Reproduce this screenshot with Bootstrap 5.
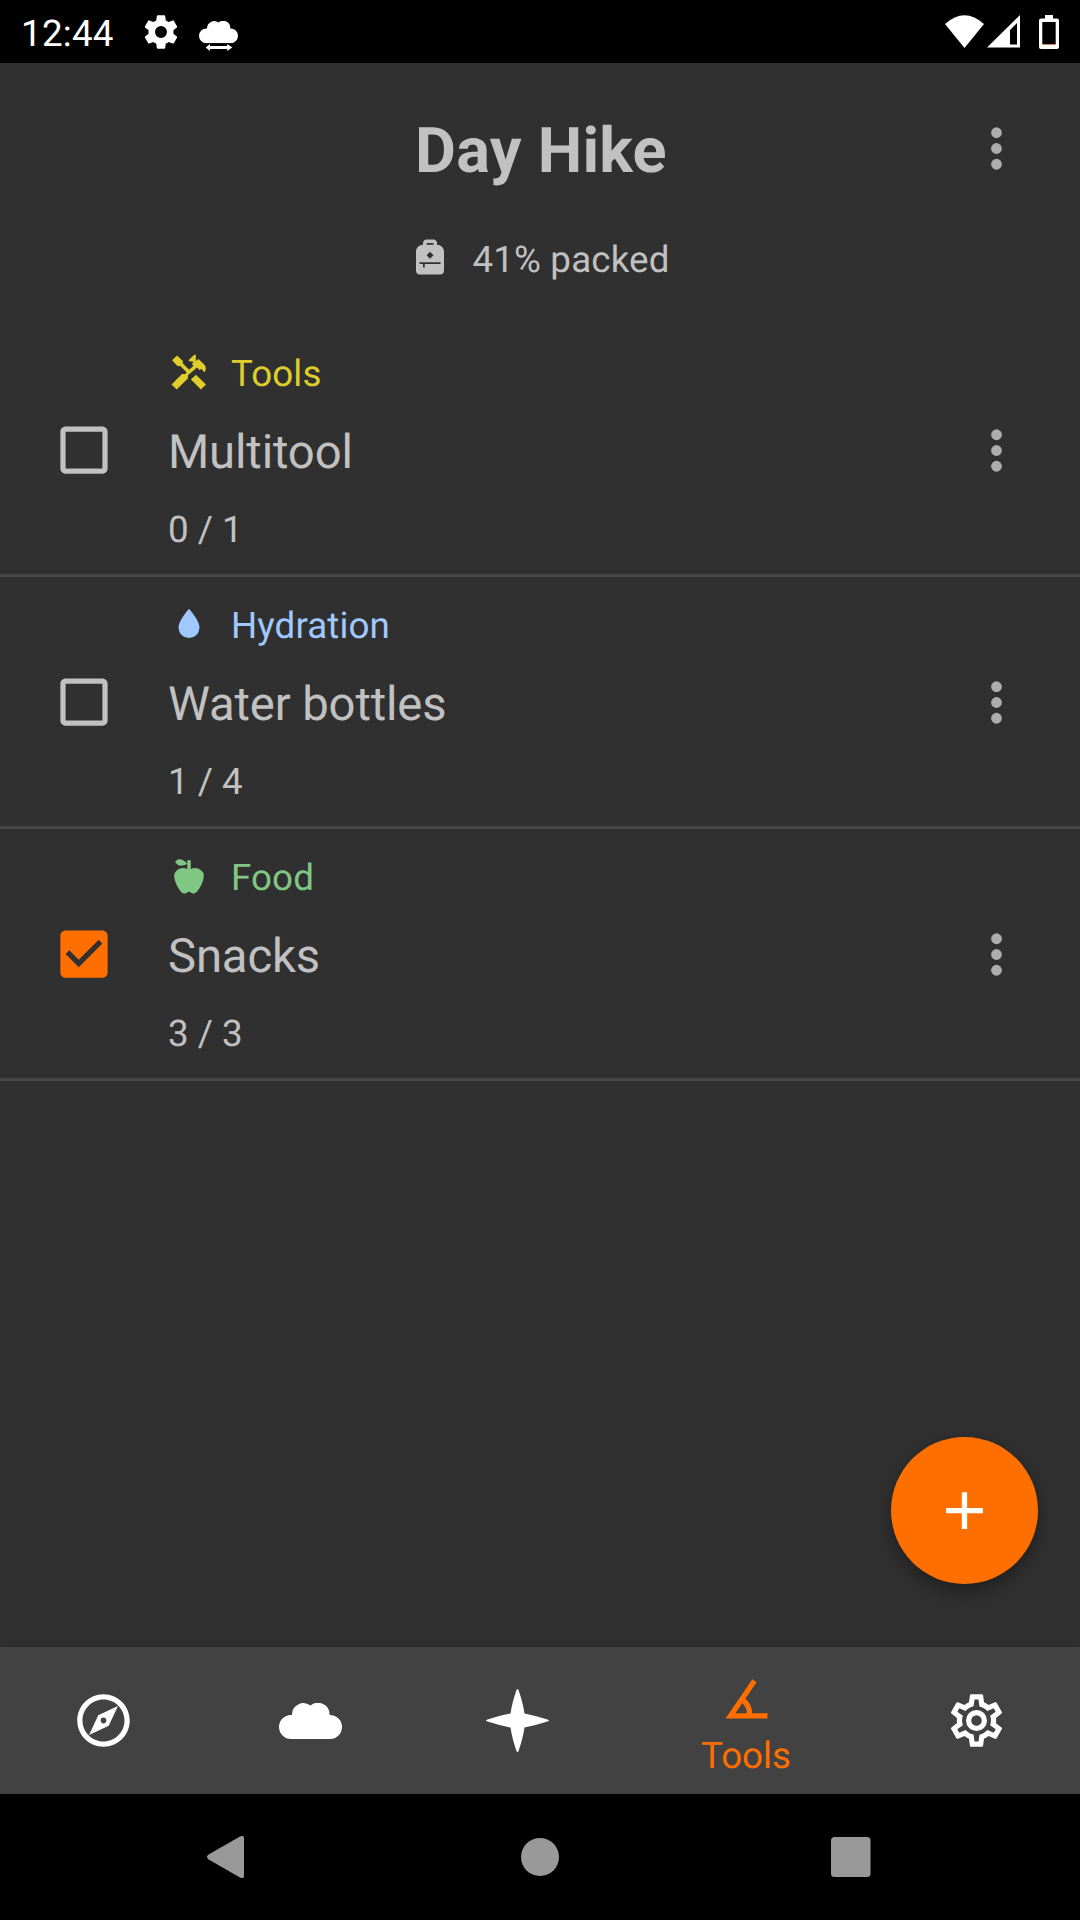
<!DOCTYPE html>
<html lang="en">
<head>
<meta charset="utf-8">
<meta name="viewport" content="width=device-width, initial-scale=1">
<title>Day Hike</title>
<link href="https://cdn.jsdelivr.net/npm/bootstrap@5.3.0/dist/css/bootstrap.min.css" rel="stylesheet">
<style>
  body { background: #303030; color: #c1c1c1; font-family: Roboto, sans-serif; font-size: 36.75px; line-height: 42px; text-rendering: geometricPrecision; }
  svg { display: block; fill: currentColor; flex: none; }
  .phone { width: 1080px; height: 1920px; }
  .status { height: 63px; background: #000; color: #fff; padding: 0 21px 0 21px; }
  .clock { width: 101px; padding-top: 4px; letter-spacing: .25px; }
  .appbar { height: 262px; padding-top: 47px; }
  .title-row { height: 84px; }
  .title-row h1 { font-size: 63px; font-weight: 700; line-height: 84px; padding: 0 0 0 2px; letter-spacing: .25px; }
  .more { width: 63px; height: 63px; color: #adadad; margin-right: 52px; }
  .title-row .more { right: 0; top: 7px; }
  .item .more { margin-top: 2px; }
  .packed { height: 42px; margin-top: 42px; gap: 21px; padding-right: 1px; }
  .packed span { padding-top: 5px; letter-spacing: .15px; }
  .item { height: 252px; background: none; color: inherit; border: 0; border-bottom: 3px solid #474747; padding: 0; }
  .item + .item { border-top: 0; }
  .tick { margin-left: 52px; width: 64px; height: 64px; }
  .info { margin-left: 52px; padding-top: 26px; }
  .cat { gap: 21px; height: 42px; }
  .cat span { padding-top: 4px; letter-spacing: .1px; }
  .cat-tools { color: #dfcd2c; }
  .cat-water { color: #a0c9ff; }
  .cat-food { color: #81c784; }
  .item-name { font-size: 47.25px; line-height: 56px; margin-top: 31px; letter-spacing: -.15px; }
  .amount { line-height: 44px; margin-top: 28px; }
  .fab { width: 147px; height: 147px; background: #ff6f00; color: #fff; right: 42px; bottom: 63px; border: 0; box-shadow: 0 10px 20px rgba(0,0,0,.22), 0 3px 12px rgba(0,0,0,.14); }
  .tabs { height: 147px; background: #424242; color: #fff; box-shadow: 0 0 12px rgba(0,0,0,.2); }
  .tab { width: 207px; }
  .tab-wide { width: 251px; color: #ff6f00; }
  .tab-wide div { line-height: 42px; margin-top: 7px; padding-right: 1px; }
  .orange { color: #ff6f00; }
  .sysnav { height: 126px; background: #000; color: #999; }
</style>
</head>
<body>
<svg width="0" height="0" class="position-absolute">
  <defs>
    <symbol id="dots" viewBox="0 0 24 24"><circle cx="12" cy="6" r="2.05"/><circle cx="12" cy="12" r="2.05"/><circle cx="12" cy="18" r="2.05"/></symbol>
    <symbol id="box" viewBox="0 0 24 24"><path d="M19 5v14H5V5h14m0-2H5c-1.1 0-2 .9-2 2v14c0 1.1.9 2 2 2h14c1.1 0 2-.9 2-2V5c0-1.1-.9-2-2-2z"/></symbol>
    <symbol id="checked" viewBox="0 0 24 24"><path d="M19 3H5c-1.110 0-2 .9-2 2v14c0 1.100.89 2 2 2h14c1.110 0 2-.9 2-2V5c0-1.100-.89-2-2-2zm-9 14l-5-5 1.410-1.410L10 14.170l7.590-7.590L19 8l-9 9z"/></symbol>
    <symbol id="cloud" viewBox="0 0 63 36"><path d="M12 36A12 12 0 0 1 12 12H13A11.5 11.5 0 0 1 31.500 2.600A11.500 11.500 0 0 1 50.500 12H51A12 12 0 0 1 51 36Z"/></symbol>
  </defs>
</svg>
<div class="phone d-flex flex-column overflow-hidden">
  <header class="status d-flex align-items-center">
    <div class="clock">12:44</div>
    <svg width="40" height="40" viewBox="0 0 24 24" style="margin-left:19px"><path d="M12 15.600A3.600 3.600 0 0 1 8.400 12 3.600 3.600 0 0 1 12 8.400 3.600 3.600 0 0 1 15.600 12 3.600 3.600 0 0 1 12 15.600M19.430 13L19.500 12 19.430 11 21.540 9.370C21.730 9.220 21.780 8.950 21.660 8.730L19.660 5.270C19.540 5.050 19.270 4.960 19.050 5.050L16.560 6.050C16.040 5.660 15.500 5.320 14.870 5.070L14.500 2.420C14.460 2.180 14.250 2 14 2H10C9.750 2 9.540 2.180 9.500 2.420L9.130 5.070C8.500 5.320 7.960 5.660 7.440 6.050L4.950 5.050C4.730 4.960 4.460 5.050 4.340 5.270L2.340 8.730C2.210 8.950 2.270 9.220 2.460 9.370L4.570 11 4.500 12 4.570 13 2.460 14.630C2.270 14.780 2.210 15.050 2.340 15.270L4.340 18.730C4.460 18.950 4.730 19.030 4.950 18.950L7.440 17.940C7.960 18.340 8.500 18.680 9.130 18.930L9.500 21.580C9.540 21.820 9.750 22 10 22H14C14.250 22 14.460 21.820 14.500 21.580L14.870 18.930C15.500 18.670 16.040 18.340 16.560 17.940L19.050 18.950C19.270 19.030 19.540 18.950 19.660 18.730L21.660 15.270C21.780 15.050 21.730 14.780 21.540 14.630Z"/></svg>
    <svg width="39" height="30" viewBox="0 0 39 30" style="margin-left:18px;margin-top:8px"><use href="#cloud" y="0" width="39" height="22.300"/><path d="M6.700 26.500L11 23V24.900H28.200V23L33.300 26.500 28.200 30V28.100H11V30Z"/></svg>
    <svg class="ms-auto" width="39" height="33" viewBox="0 0 39 33"><path d="M0 9Q19.500-8.500 39 9L19.500 33Z"/></svg>
    <svg width="33" height="33" viewBox="0 0 33 33" style="margin-left:3px"><path fill-rule="evenodd" d="M33 0V32.500H0ZM30 8L23 15V29.500H30Z"/></svg>
    <svg width="20" height="34" viewBox="0 0 20 34" style="margin-left:19px"><path fill-rule="evenodd" d="M6 0H14V3.500H18A2 2 0 0 1 20 5.500V32A2 2 0 0 1 18 34H2A2 2 0 0 1 0 32V5.500A2 2 0 0 1 2 3.500H6ZM3.300 7V29H16.700V7Z"/><path fill="#d9826a" d="M3.300 29h13.400v1H3.300z"/></svg>
  </header>

  <main class="flex-grow-1 position-relative">
    <section class="appbar">
      <div class="title-row d-flex justify-content-center position-relative">
        <h1 class="m-0">Day Hike</h1>
        <svg class="more position-absolute"><use href="#dots"/></svg>
      </div>
      <div class="packed d-flex justify-content-center align-items-center">
        <svg width="42" height="42" viewBox="0 0 24 24"><path d="M16 5V4C16 2.900 15.110 2 14 2H10C8.900 2 8 2.900 8 4V5C5.790 5 4 6.790 4 9V20C4 21.100 4.900 22 6 22H18C19.110 22 20 21.100 20 20V9C20 6.790 18.210 5 16 5M10 4H14V5H10V4M12 9L14 11L12 13L10 11L12 9M18 16H9V18H8V16H6V15H18V16Z"/></svg>
        <span>41% packed</span>
      </div>
    </section>

    <div class="list-group rounded-0">
      <div class="list-group-item item d-flex">
        <svg class="tick align-self-center"><use href="#box" x=".5" y=".5" width="63" height="63"/></svg>
        <div class="info flex-grow-1">
          <div class="cat cat-tools d-flex align-items-center">
            <svg width="42" height="42" viewBox="0 0 24 24"><path d="M21.700 19.200L16 13.500 13.100 16.300 18.800 22ZM18.100 11L18.900 10.100 20.900 12.200C21.900 11 21.900 8.900 20.700 7.700L17.400 4.600 15.900 5.700V2.200L15 2.100 11.700 5.300 12.500 6H14.600L13.700 7.500 14.600 8.400 12.100 10.700 8.500 7.200V5.700L5.200 2.500 2.300 5.300 5.400 8.500H7L10.600 12.200 10.100 13.100H8L2 19.100 4.900 22 11.400 15.700V13.900L16.600 9.400Z"/></svg>
            <span>Tools</span>
          </div>
          <div class="item-name">Multitool</div>
          <div class="amount">0 / 1</div>
        </div>
        <svg class="more align-self-center"><use href="#dots"/></svg>
      </div>
      <div class="list-group-item item d-flex">
        <svg class="tick align-self-center"><use href="#box" x=".5" y=".5" width="63" height="63"/></svg>
        <div class="info flex-grow-1">
          <div class="cat cat-water d-flex align-items-center">
            <svg width="42" height="42" viewBox="0 0 24 24"><path d="M12 20A6 6 0 0 1 6 14C6 10 12 3.250 12 3.250C12 3.250 18 10 18 14A6 6 0 0 1 12 20Z"/></svg>
            <span>Hydration</span>
          </div>
          <div class="item-name">Water bottles</div>
          <div class="amount">1 / 4</div>
        </div>
        <svg class="more align-self-center"><use href="#dots"/></svg>
      </div>
      <div class="list-group-item item d-flex">
        <svg class="tick align-self-center orange"><use href="#checked" x=".5" y=".5" width="63" height="63"/></svg>
        <div class="info flex-grow-1">
          <div class="cat cat-food d-flex align-items-center">
            <svg width="42" height="42" viewBox="0 0 24 24"><path d="M20 10C22 13 17 22 15 22C13 22 13 21 12 21C11 21 11 22 9 22C7 22 2 13 4 10C6 7 9 7 11 8V5C5.380 8.070 4.110 3.780 4.110 3.780C4.110 3.780 6.770 .19 11 5V3H13V8C15 7 18 7 20 10Z"/></svg>
            <span>Food</span>
          </div>
          <div class="item-name">Snacks</div>
          <div class="amount">3 / 3</div>
        </div>
        <svg class="more align-self-center"><use href="#dots"/></svg>
      </div>
    </div>

    <button class="fab btn rounded-circle position-absolute d-flex align-items-center justify-content-center p-0" aria-label="Add">
      <svg width="63" height="63" viewBox="0 0 24 24"><path d="M19 13h-6v6h-2v-6H5v-2h6V5h2v6h6v2z"/></svg>
    </button>
  </main>

  <nav class="tabs d-flex">
    <div class="tab d-flex align-items-center justify-content-center">
      <svg width="63" height="63" viewBox="0 0 24 24"><path d="M12 2C6.480 2 2 6.480 2 12s4.480 10 10 10 10-4.480 10-10S17.520 2 12 2zm0 18c-4.410 0-8-3.590-8-8s3.590-8 8-8 8 3.590 8 8-3.590 8-8 8zm-5.500-2.500l7.510-3.490L17.500 6.500 9.990 9.990 6.500 17.500zm5.500-6.600c.61 0 1.100.49 1.100 1.100s-.49 1.100-1.100 1.100-1.100-.49-1.100-1.100.49-1.100 1.100-1.100z"/></svg>
    </div>
    <div class="tab d-flex align-items-center justify-content-center">
      <svg width="63" height="36"><use href="#cloud"/></svg>
    </div>
    <div class="tab d-flex align-items-center justify-content-center">
      <svg width="63" height="63" viewBox="0 0 63 63"><path d="M31.500 0Q32.300 0 32.700 1.500Q37 14 38.500 24.500Q49 26.500 61.500 30.500Q63 31 63 31.500Q63 32 61.500 32.500Q49 36.500 38.500 38.500Q37 49 32.700 61.500Q32.300 63 31.500 63Q30.700 63 30.300 61.500Q26 49 24.500 38.500Q14 36.500 1.500 32.500Q0 32 0 31.500Q0 31 1.500 30.500Q14 26.500 24.500 24.500Q26 14 30.300 1.500Q30.700 0 31.500 0Z"/></svg>
    </div>
    <div class="tab-wide d-flex flex-column align-items-center pt-4">
      <svg width="63" height="63" viewBox="0 0 63 63" style="margin-top:-3px;margin-bottom:-3px"><g fill="none" stroke="currentColor" stroke-width="5.200"><path d="M52.500 47.900H15.500L39.500 12.700"/><path d="M27 31.500A17 17 0 0 1 34.400 47"/></g></svg>
      <div>Tools</div>
    </div>
    <div class="flex-grow-1 d-flex align-items-center justify-content-center">
      <svg width="63" height="63" viewBox="0 0 24 24"><path d="M12 8A4 4 0 0 1 16 12A4 4 0 0 1 12 16A4 4 0 0 1 8 12A4 4 0 0 1 12 8M12 10A2 2 0 0 0 10 12A2 2 0 0 0 12 14A2 2 0 0 0 14 12A2 2 0 0 0 12 10M10 22C9.750 22 9.540 21.820 9.500 21.580L9.130 18.930C8.500 18.680 7.960 18.340 7.440 17.940L4.950 18.950C4.730 19.030 4.460 18.950 4.340 18.730L2.340 15.270C2.210 15.050 2.270 14.780 2.460 14.630L4.570 12.970L4.500 12L4.570 11L2.460 9.370C2.270 9.220 2.210 8.950 2.340 8.730L4.340 5.270C4.460 5.050 4.730 4.960 4.950 5.050L7.440 6.050C7.960 5.660 8.500 5.320 9.130 5.070L9.500 2.420C9.540 2.180 9.750 2 10 2H14C14.250 2 14.460 2.180 14.500 2.420L14.870 5.070C15.500 5.320 16.040 5.660 16.560 6.050L19.050 5.050C19.270 4.960 19.540 5.050 19.660 5.270L21.660 8.730C21.790 8.950 21.730 9.220 21.540 9.370L19.430 11L19.500 12L19.430 13L21.540 14.630C21.730 14.780 21.790 15.050 21.660 15.270L19.660 18.730C19.540 18.950 19.270 19.040 19.050 18.950L16.560 17.950C16.040 18.340 15.500 18.680 14.870 18.930L14.500 21.580C14.460 21.820 14.250 22 14 22H10M11.250 4L10.880 6.610C9.680 6.860 8.620 7.500 7.850 8.390L5.440 7.350L4.690 8.650L6.800 10.200C6.400 11.370 6.400 12.640 6.800 13.800L4.680 15.360L5.430 16.660L7.860 15.620C8.630 16.500 9.680 17.140 10.870 17.380L11.240 20H12.760L13.130 17.390C14.320 17.140 15.370 16.500 16.140 15.620L18.570 16.660L19.320 15.360L17.200 13.810C17.600 12.640 17.600 11.370 17.200 10.200L19.310 8.650L18.560 7.350L16.150 8.390C15.380 7.500 14.320 6.860 13.120 6.620L12.750 4H11.250Z"/></svg>
    </div>
  </nav>

  <footer class="sysnav d-flex align-items-center">
    <svg width="37" height="42" viewBox="0 0 37 42" style="margin-left:207px"><path d="M33 .6Q37-1.500 37 2.500V39.500Q37 43.500 33 41.400L1.200 23.200Q-1.200 21 1.200 18.800Z"/></svg>
    <svg width="38" height="38" viewBox="0 0 38 38" style="margin-left:277px"><circle cx="19" cy="19" r="19"/></svg>
    <svg width="40" height="40" viewBox="0 0 40 40" style="margin-left:272px"><rect width="39.500" height="40" rx="3.500"/></svg>
  </footer>
</div>
<script src="https://cdn.jsdelivr.net/npm/bootstrap@5.3.0/dist/js/bootstrap.bundle.min.js"></script>
</body>
</html>
